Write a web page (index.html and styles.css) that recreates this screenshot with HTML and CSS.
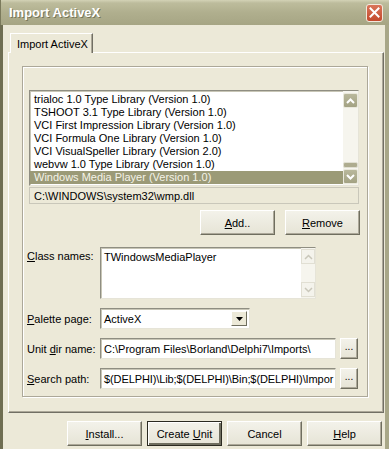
FILE: index.html
```html
<!DOCTYPE html>
<html lang="en">
  <head>
    <meta charset="UTF-8" />
    <title>Import ActiveX</title>
    <link rel="stylesheet" href="styles.css">
  </head>
  <body>
    <div class="window">
      <div class="titlebar">
        <span class="title">Import ActiveX</span>
        <span class="close">
          <svg width="11" height="11" viewBox="0 0 11 11">
            <path d="M1.5 1.5 L9.5 9.5 M9.5 1.5 L1.5 9.5" stroke="#fff" stroke-width="2" stroke-linecap="square" />
          </svg>
        </span>
      </div>

      <div class="client">
        <div class="tabs">
          <div class="tab">Import ActiveX</div>
        </div>

        <div class="panel">
          <div class="group">
            <div class="listbox">
              <ul class="items">
                <li>trialoc 1.0 Type Library (Version 1.0)</li>
                <li>TSHOOT 3.1 Type Library (Version 1.0)</li>
                <li>VCI First Impression Library (Version 1.0)</li>
                <li>VCI Formula One Library (Version 1.0)</li>
                <li>VCI VisualSpeller Library (Version 2.0)</li>
                <li>webvw 1.0 Type Library (Version 1.0)</li>
                <li class="selected">Windows Media Player (Version 1.0)</li>
              </ul>
              <div class="vscroll">
                <div class="sbtn">
                  <svg width="9" height="6" viewBox="0 0 9 6"><path d="M1 5 L4.5 1.5 L8 5" fill="none" stroke="#fff" stroke-width="2" /></svg>
                </div>
                <div class="track"><div class="thumb"></div></div>
                <div class="sbtn">
                  <svg width="9" height="6" viewBox="0 0 9 6"><path d="M1 1 L4.5 4.5 L8 1" fill="none" stroke="#fff" stroke-width="2" /></svg>
                </div>
              </div>
            </div>

            <div class="pathbox">C:\WINDOWS\system32\wmp.dll</div>

            <div class="addrow">
              <button class="btn"><u>A</u>dd..</button>
              <button class="btn"><u>R</u>emove</button>
            </div>

            <div class="field memo-row">
              <label><u>C</u>lass names:</label>
              <div class="memo">
                <span>TWindowsMediaPlayer</span>
                <div class="memo-scroll">
                  <div class="dbtn">
                    <svg width="9" height="6" viewBox="0 0 9 6"><path d="M1 5 L4.5 1.5 L8 5" fill="none" stroke="#c9c7ba" stroke-width="1.5" /></svg>
                  </div>
                  <div class="dbtn">
                    <svg width="9" height="6" viewBox="0 0 9 6"><path d="M1 1 L4.5 4.5 L8 1" fill="none" stroke="#c9c7ba" stroke-width="1.5" /></svg>
                  </div>
                </div>
              </div>
            </div>

            <div class="field">
              <label><u>P</u>alette page:</label>
              <div class="combo">
                <span>ActiveX</span>
                <div class="drop">
                  <svg width="7" height="4" viewBox="0 0 7 4"><path d="M0 0 H7 L3.5 4 Z" fill="#000" /></svg>
                </div>
              </div>
            </div>

            <div class="field">
              <label>Unit <u>d</u>ir name:</label>
              <div class="edit">C:\Program Files\Borland\Delphi7\Imports\</div>
              <button class="btn dots">...</button>
            </div>

            <div class="field">
              <label><u>S</u>earch path:</label>
              <div class="edit tight">$(DELPHI)\Lib;$(DELPHI)\Bin;$(DELPHI)\Impor</div>
              <button class="btn dots">...</button>
            </div>
          </div>
        </div>

        <div class="actions">
          <button class="btn"><u>I</u>nstall...</button>
          <button class="btn default">Create <u>U</u>nit</button>
          <button class="btn">Cancel</button>
          <button class="btn"><u>H</u>elp</button>
        </div>
      </div>
    </div>
  </body>
</html>
```

FILE: styles.css
```css
* {
  margin: 0;
  padding: 0;
  box-sizing: border-box;
}

body {
  background: #ece9d8;
  font-family: "Liberation Sans", Arial, sans-serif;
  font-size: 11px;
  color: #000;
  overflow: hidden;
}

.window {
  width: 389px;
  height: 449px;
  display: flex;
  flex-direction: column;
  background: #ece9d8;
}

/* title bar */
.titlebar {
  height: 25px;
  display: flex;
  align-items: center;
  justify-content: space-between;
  padding: 0 6px 0 8px;
  background: linear-gradient(#d3d2b6 0, #bdbc9c 3px, #b0af8e 50%, #a6a584 100%);
  border-left: 1px solid #7b7a5c;
}
.title {
  color: #fff;
  font-weight: bold;
  font-size: 13px;
  text-shadow: 1px 1px 0 #77765a;
}
.close {
  width: 17px;
  height: 18px;
  display: flex;
  align-items: center;
  justify-content: center;
  background: linear-gradient(#d9755a, #c4492c);
  border: 1px solid #f3e8dc;
  border-radius: 3px;
}

/* client area */
.client {
  flex: 1;
  display: flex;
  flex-direction: column;
  border-left: 3px solid #6f6e52;
  border-right: 4px solid #a8a788;
  padding: 0 1px 0 5px;
}

.tabs {
  display: flex;
  margin-top: 8px;
  padding-left: 2px;
}
.tab {
  width: 83px;
  height: 20px;
  padding: 4px 0 0 6px;
  white-space: nowrap;
  background: #ece9d8;
  border: 1px solid #fff;
  border-right: 1px solid #716f64;
  border-bottom: none;
  box-shadow: inset -1px 0 #aca899;
  margin-bottom: -1px;
  position: relative;
  z-index: 1;
}

.panel {
  height: 361px;
  border: 1px solid #fff;
  border-right-color: #716f64;
  border-bottom-color: #716f64;
  box-shadow: inset -1px -1px #aca899;
  padding: 13px 0 0 13px;
}

.group {
  width: 346px;
  height: 331px;
  border: 1px solid #aca899;
  box-shadow: 1px 1px 0 #fff, inset 1px 1px 0 #fff;
  padding: 23px 0 0 6px;
}

/* list box */
.listbox {
  width: 330px;
  height: 96px;
  display: flex;
  background: #fff;
  border: 1px solid #8f8e82;
  border-right-color: #e6e4d8;
  border-bottom-color: #e6e4d8;
  box-shadow: inset 1px 1px #c8c6b6;
}
.items {
  flex: 1;
  list-style: none;
  padding-top: 2px;
}
.items li {
  height: 13px;
  line-height: 13px;
  padding-left: 4px;
  white-space: nowrap;
}
.items li.selected {
  background: #9b9a77;
  color: #f4f3e8;
}
.vscroll {
  width: 15px;
  display: flex;
  flex-direction: column;
  padding: 2px 0 1px;
  background: #f6f5ee;
}
.sbtn {
  height: 15px;
  display: flex;
  align-items: center;
  justify-content: center;
  background: linear-gradient(#b9b89c, #a3a283);
  border: 1px solid #e9e8dc;
  border-radius: 2px;
}
.track {
  flex: 1;
  display: flex;
  align-items: flex-end;
  padding-bottom: 1px;
}
.thumb {
  width: 100%;
  height: 6px;
  background: #aeac8f;
  border: 1px solid #e0dfd2;
  border-radius: 2px;
}

.pathbox {
  width: 330px;
  height: 17px;
  margin-top: 1px;
  padding: 2px 0 0 4px;
  border: 1px solid #c9c7ba;
  background: #ece9d8;
  white-space: nowrap;
}

/* buttons */
.btn {
  font: inherit;
  color: #000;
  width: 75px;
  height: 25px;
  background: linear-gradient(#f3f2ea, #e6e4d6);
  border: 1px solid;
  border-color: #fff #6f6e5f #6f6e5f #fff;
  box-shadow: inset -1px -1px #aca899;
}
.btn.default {
  border: 1px solid #2b2a20;
  box-shadow: inset 1px 1px #fff, inset -2px -2px #6f6e5f;
}

.addrow {
  display: flex;
  justify-content: flex-end;
  gap: 10px;
  width: 331px;
  margin-top: 6px;
}

/* labelled fields */
.field {
  display: flex;
  align-items: center;
  margin: 9px 0 0 -2px;
}
.field label {
  width: 73px;
  white-space: nowrap;
}
.memo-row {
  align-items: flex-start;
  margin-top: 12px;
}
.memo-row label {
  padding-top: 3px;
}
.memo {
  width: 216px;
  height: 52px;
  display: flex;
  background: #fff;
  border: 1px solid #8f8e82;
  border-right-color: #e6e4d8;
  border-bottom-color: #e6e4d8;
  box-shadow: inset 1px 1px #c8c6b6;
}
.memo span {
  flex: 1;
  padding: 3px 0 0 3px;
}
.memo-scroll {
  width: 14px;
  display: flex;
  flex-direction: column;
  justify-content: space-between;
  padding: 1px 0;
  background: #f6f5ee;
}
.dbtn {
  height: 15px;
  display: flex;
  align-items: center;
  justify-content: center;
  background: #f4f3ec;
  border: 1px solid #e1dfd3;
}

.combo {
  width: 150px;
  height: 21px;
  display: flex;
  align-items: center;
  background: #fff;
  border: 1px solid #8f8e82;
  border-right-color: #e6e4d8;
  border-bottom-color: #e6e4d8;
  box-shadow: inset 1px 1px #c8c6b6;
  padding: 2px 2px 2px 3px;
}
.combo span {
  flex: 1;
}
.drop {
  width: 16px;
  height: 100%;
  display: flex;
  align-items: center;
  justify-content: center;
  background: #ece9d8;
  border: 1px solid;
  border-color: #fff #6f6e5f #6f6e5f #fff;
}

.edit {
  width: 236px;
  height: 21px;
  padding: 4px 0 0 3px;
  background: #fff;
  border: 1px solid #8f8e82;
  border-right-color: #e6e4d8;
  border-bottom-color: #e6e4d8;
  box-shadow: inset 1px 1px #c8c6b6;
  white-space: nowrap;
  overflow: hidden;
}
.edit.tight {
  letter-spacing: -0.1px;
}
.btn.dots {
  width: 18px;
  height: 21px;
  margin-left: 4px;
  padding-bottom: 4px;
  font-size: 10px;
}

.actions {
  display: flex;
  justify-content: flex-end;
  gap: 5px;
  margin-top: 8px;
  margin-right: 2px;
}
```
